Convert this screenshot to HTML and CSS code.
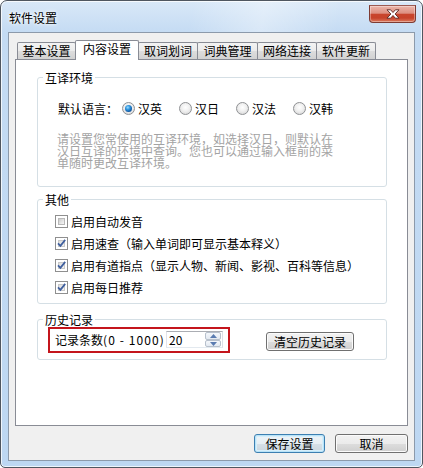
FILE: index.html
```html
<!DOCTYPE html>
<html lang="zh-CN">
<head>
<meta charset="utf-8">
<title>软件设置</title>
<link rel="stylesheet" href="styles.css">
</head>
<body>
<div class="window">
  <div class="titlebar">
    <span class="title">软件设置</span>
    <div class="close">
      <svg width="14" height="10" viewBox="0 0 14 10"><path d="M1 0.8H4.6L7 3.5L9.4 0.8H13L9.1 5L13 9.2H9.4L7 6.5L4.6 9.2H1L4.9 5Z" fill="#fff" stroke="#5a2620" stroke-width="0.9" stroke-linejoin="round"/></svg>
    </div>
  </div>
  <div class="client">
    <div class="tabs">
      <div class="tab w59">基本设置</div>
      <div class="tab sel">内容设置</div>
      <div class="tab w60">取词划词</div>
      <div class="tab w61">词典管理</div>
      <div class="tab w60">网络连接</div>
      <div class="tab w60">软件更新</div>
    </div>
    <div class="panel">
      <fieldset class="group g1">
        <legend>互译环境</legend>
        <div class="g1-body">
          <div class="lang-row">
            <span class="lang-label">默认语言：</span>
            <label class="radio-item"><span class="radio on"></span>汉英</label>
            <label class="radio-item"><span class="radio"></span>汉日</label>
            <label class="radio-item"><span class="radio"></span>汉法</label>
            <label class="radio-item"><span class="radio"></span>汉韩</label>
          </div>
          <p class="hint">请设置您常使用的互译环境，如选择汉日，则默认在<br>汉日互译的环境中查询。您也可以通过输入框前的菜<br>单随时更改互译环境。</p>
        </div>
      </fieldset>
      <fieldset class="group g2">
        <legend>其他</legend>
        <div class="g2-body">
          <label class="cb-row"><span class="cb"><span class="cb-in"></span></span>启用自动发音</label>
          <label class="cb-row"><span class="cb on"><span class="cb-in"></span><svg class="check" width="13" height="13" viewBox="0 0 13 13"><path d="M3 6.3L5.4 8.9L10.2 2.9" fill="none" stroke="#3f5f9e" stroke-width="1.7"/></svg></span>启用速查（输入单词即可显示基本释义）</label>
          <label class="cb-row"><span class="cb on"><span class="cb-in"></span><svg class="check" width="13" height="13" viewBox="0 0 13 13"><path d="M3 6.3L5.4 8.9L10.2 2.9" fill="none" stroke="#3f5f9e" stroke-width="1.7"/></svg></span>启用有道指点（显示人物、新闻、影视、百科等信息）</label>
          <label class="cb-row"><span class="cb on"><span class="cb-in"></span><svg class="check" width="13" height="13" viewBox="0 0 13 13"><path d="M3 6.3L5.4 8.9L10.2 2.9" fill="none" stroke="#3f5f9e" stroke-width="1.7"/></svg></span>启用每日推荐</label>
        </div>
      </fieldset>
      <fieldset class="group g3">
        <legend>历史记录</legend>
        <div class="g3-body">
          <div class="highlight">
            <span class="count-label">记录条数<span class="range">(0 - 1000)</span></span>
            <div class="spin">
              <span class="spin-val">20</span>
              <div class="spin-btns">
                <div class="spin-btn"><svg width="7" height="4" viewBox="0 0 7 4"><path d="M0 4L3.5 0L7 4Z" fill="#5a7bb0"/></svg></div>
                <div class="spin-btn"><svg width="7" height="4" viewBox="0 0 7 4"><path d="M0 0L3.5 4L7 0Z" fill="#5a7bb0"/></svg></div>
              </div>
            </div>
          </div>
          <button class="btn clear">清空历史记录</button>
        </div>
      </fieldset>
    </div>
    <div class="actions">
      <button class="btn default save">保存设置</button>
      <button class="btn cancel">取消</button>
    </div>
  </div>
</div>
</body>
</html>
```

FILE: styles.css
```css
html, body {
  margin: 0;
  padding: 0;
  background: #ffffff;
}

body {
  width: 423px;
  height: 468px;
  font-family: "Noto Sans CJK SC", "Noto Sans", sans-serif;
  font-size: 12px;
  color: #000;
}

.window {
  box-sizing: border-box;
  width: 423px;
  height: 468px;
  border: 1px solid #4f5660;
  border-radius: 7px 7px 5px 5px;
  padding: 0 7px 6px 7px;
  display: flex;
  flex-direction: column;
  background:
    linear-gradient(100deg, rgba(255,255,255,0) 45%, rgba(255,255,255,0.35) 62%, rgba(255,255,255,0) 80%) top / 100% 32px no-repeat,
    linear-gradient(180deg, #d9e8f8 0%, #c4dbf3 32px, #bdd7f2 100%);
  box-shadow: inset 0 0 0 1px rgba(255,255,255,0.75);
}

.titlebar {
  height: 31px;
  display: flex;
  justify-content: space-between;
  align-items: flex-start;
}

.title {
  padding-top: 9px;
  padding-left: 1px;
  line-height: 16px;
  text-shadow: 0 0 5px #fff, 0 0 3px #fff;
}

.close {
  box-sizing: border-box;
  width: 47px;
  height: 18px;
  margin-top: 4px;
  margin-right: -1px;
  border: 1px solid #7e3b33;
  border-top-color: #9c5a52;
  border-radius: 0 0 4px 4px;
  background: linear-gradient(180deg, #ecb6ab 0%, #dd8f80 45%, #c8452d 52%, #c7432b 75%, #db7a5f 100%);
  box-shadow: inset 0 0 0 1px rgba(255,255,255,0.35);
  display: flex;
  align-items: center;
  justify-content: center;
}

.close svg {
  display: block;
}

.client {
  box-sizing: border-box;
  height: 430px;
  border: 1px solid #8c9aab;
  background: #f0f0f0;
  padding: 7px 6px 0 6px;
}

.tabs {
  height: 19px;
  display: flex;
  align-items: flex-end;
  padding-left: 2px;
}

.tab {
  box-sizing: border-box;
  height: 17px;
  border: 1px solid #898c95;
  border-bottom: none;
  border-radius: 2px 2px 0 0;
  background: linear-gradient(180deg, #f3f3f3 0%, #ebebeb 50%, #dddddd 51%, #d2d2d2 100%);
  text-align: center;
  line-height: 16px;
  margin-left: -1px;
}

.tab.w59 { width: 59px; margin-left: 0; }
.tab.w60 { width: 60px; }
.tab.w61 { width: 61px; }

.tab.sel {
  width: 64px;
  height: 20px;
  margin-bottom: -1px;
  background: #ffffff;
  position: relative;
  z-index: 1;
  line-height: 16px;
}

.panel {
  box-sizing: border-box;
  height: 367px;
  border: 1px solid #898c95;
  background: #ffffff;
  padding: 11px 20px 0 21px;
}

.group {
  margin: 0;
  padding: 0;
  min-width: 0;
  border: 1px solid #d5dfe5;
  border-radius: 3px;
}

.group legend {
  padding: 0 2px;
  margin-left: 5px;
  line-height: 14px;
  font-size: 12px;
}

.g2 { margin-top: 6px; }
.g3 { margin-top: 9px; }

.g1-body {
  padding: 16px 0 17px 20px;
}

.lang-row {
  display: flex;
  align-items: center;
  height: 16px;
}

.lang-label {
  width: 64px;
  flex: none;
}

.radio-item {
  width: 57px;
  flex: none;
  display: flex;
  align-items: center;
  gap: 3px;
  line-height: 16px;
}

.radio {
  box-sizing: border-box;
  width: 13px;
  height: 13px;
  border-radius: 50%;
  border: 1px solid #8f9194;
  background: radial-gradient(circle at 50% 40%, #ffffff 0%, #f0f0f0 45%, #cfcfcf 100%);
  display: flex;
  align-items: center;
  justify-content: center;
}

.radio.on::after {
  content: "";
  width: 7px;
  height: 7px;
  border-radius: 50%;
  background: radial-gradient(circle at 40% 35%, #9adcff 0%, #2f95de 35%, #0b4f9a 75%, #083a75 100%);
}

.hint {
  margin: 16px 0 0 -1px;
  color: #a3a3a3;
  line-height: 12px;
  font-size: 12px;
  white-space: nowrap;
}

.g2-body {
  padding: 4px 0 4px 17px;
}

.cb-row {
  display: flex;
  align-items: center;
  gap: 3px;
  height: 22px;
  white-space: nowrap;
}

.cb {
  box-sizing: border-box;
  width: 13px;
  height: 13px;
  border: 1px solid #8f8f8f;
  background: #ffffff;
  padding: 2px;
  flex: none;
  position: relative;
}

.cb-in {
  display: block;
  box-sizing: border-box;
  width: 7px;
  height: 7px;
  border: 1px solid #b9b9b9;
  background: linear-gradient(135deg, #cbcbcb 0%, #e6e6e6 60%, #f6f6f6 100%);
}

.cb.on .cb-in {
  border-color: #c9c9c9;
  background: linear-gradient(135deg, #dedede 0%, #f2f2f2 100%);
}

.check {
  position: absolute;
  left: -1px;
  top: -1px;
}

.g3-body {
  padding: 0 0 6px 10px;
  display: flex;
  align-items: flex-start;
}

.highlight {
  box-sizing: border-box;
  width: 182px;
  height: 26px;
  border: 2px solid #c4151c;
  padding: 0 4px 0 5px;
  display: flex;
  align-items: center;
}

.count-label {
  width: 111px;
  flex: none;
  white-space: nowrap;
}

.range {
  letter-spacing: 1.1px;
}

.spin {
  box-sizing: border-box;
  width: 57px;
  height: 17px;
  border: 1px solid;
  border-color: #abadb3 #dbdfe6 #e3e9ef #e2e3ea;
  background: #ffffff;
  display: flex;
  align-items: stretch;
  flex: none;
}

.spin-val {
  flex: 1;
  padding-left: 2px;
  line-height: 15px;
}

.spin-btns {
  width: 16px;
  margin-right: 1px;
  display: flex;
  flex-direction: column;
}

.spin-btn {
  flex: 1;
  box-sizing: border-box;
  border: 1px solid #b7c0cc;
  border-radius: 2px;
  background: linear-gradient(180deg, #f4f7fb 0%, #e3e9f1 100%);
  display: flex;
  align-items: center;
  justify-content: center;
}

.spin-btn svg {
  display: block;
}

.btn {
  box-sizing: border-box;
  height: 19px;
  padding: 0;
  border: 1px solid #707070;
  border-radius: 3px;
  background: linear-gradient(180deg, #f2f2f2 0%, #ebebeb 50%, #dddddd 51%, #cfcfcf 100%);
  box-shadow: inset 0 0 0 1px #fbfbfb;
  font-family: "Noto Sans CJK SC", "Noto Sans", sans-serif;
  font-size: 12px;
  line-height: 17px;
  color: #000;
  text-align: center;
}

.clear {
  width: 88px;
  margin-left: 36px;
  margin-top: 5px;
}

.actions {
  margin-top: 8px;
  display: flex;
  justify-content: flex-end;
  gap: 10px;
}

.save { width: 71px; }
.cancel { width: 73px; }

.btn.default {
  border-color: #3c7fb1;
  box-shadow: inset 0 0 0 1px #b8e3f8, inset 0 0 0 2px #d6eefa;
  background: linear-gradient(180deg, #eef4f8 0%, #e6eef3 50%, #d6e0e7 51%, #cbd6de 100%);
}
```
